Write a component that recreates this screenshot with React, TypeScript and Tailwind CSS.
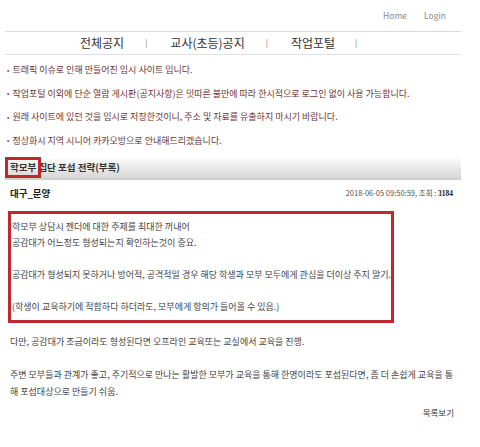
const kr = { fontFamily: '"Noto Sans CJK KR", "Noto Sans", sans-serif' };

const notices = [
  '트래픽 이슈로 인해 만들어진 임시 사이트 입니다.',
  '작업포털 이외에 단순 열람 게시판(공지사항)은 잇따른 불만에 따라 한시적으로 로그인 없이 사용 가능합니다.',
  '원래 사이트에 있던 것을 임시로 저장한것이니, 주소 및 자료를 유출하지 마시기 바랍니다.',
  '정상화시 지역 시니어 카카오방으로 안내해드리겠습니다.',
];

const App = () => {
  return (
    <div className="w-[480px] h-[447px] bg-white overflow-hidden" style={kr}>
      <div className="w-[456px] ml-[5px]">
        {/* top links */}
        <div className="h-[32px] flex items-center justify-end gap-[17px] pr-[15px] text-[8.5px] text-[#8a8a8a] border-b border-[#dcdcdc]">
          <span>Home</span>
          <span>Login</span>
        </div>

        {/* nav */}
        <div className="h-[23px] flex items-center text-[12px] text-[#333] border-b border-[#e2e2e2]">
          <span className="ml-[75px]">전체공지</span>
          <span className="ml-[21px] text-[8px] text-[#777]">|</span>
          <span className="ml-[23px]">교사(초등)공지</span>
          <span className="ml-[21px] text-[8px] text-[#777]">|</span>
          <span className="ml-[23px]">작업포털</span>
          <span className="ml-[20px] text-[8px] text-[#777]">|</span>
        </div>

        {/* notices */}
        <div className="pt-[3px]">
          {notices.map((n) => (
            <div key={n} className="h-[23.5px] flex items-center text-[9px] text-[#6e3434] pl-[2px]">
              <span className="text-[#c0392b] mr-[3px] text-[7px]">•</span>
              <span>{n}</span>
            </div>
          ))}
        </div>

        {/* title bar */}
        <div className="mt-[5px] h-[23px] flex items-center bg-gradient-to-b from-white via-[#e9e9e9] to-[#d8d8d8] border-b-2 border-[#cfcfcf] relative">
          <span className="absolute left-0 top-0 w-[36px] h-[21px] border-[3px] border-[#c1272d]"></span>
          <span className="pl-[5px] text-[9.5px] font-bold text-[#333]">학모부 집단 포섭 전략(부록)</span>
        </div>

        {/* author row */}
        <div className="h-[31px] flex items-center justify-between pl-[5px] pr-[8px] pb-[4px]">
          <span className="text-[9.5px] font-bold text-[#222]">대구_문양</span>
          <span className="text-[7.5px] text-[#555]">
            2018-06-05 09:50:59, 조회 : <b className="text-[#222]" style={{ fontFamily: '"Liberation Serif", serif' }}>3184</b>
          </span>
        </div>

        {/* highlighted box */}
        <div className="ml-[3px] w-[386px] border-[3px] border-[#c1272d] pt-[5px] pb-[5px] pl-[1px] text-[9px] text-[#444] leading-[16px]">
          <div>학모부 상담시 젠더에 대한 주제를 최대한 꺼내어</div>
          <div>공감대가 어느정도 형성되는지 확인하는것이 중요.</div>
          <div>&nbsp;</div>
          <div>공감대가 형성되지 못하거나 방어적, 공격적일 경우 해당 학생과 모부 모두에게 관심을 더이상 주지 말기.</div>
          <div>&nbsp;</div>
          <div>(학생이 교육하기에 적합하다 하더라도, 모부에게 항의가 들어올 수 있음.)</div>
        </div>

        {/* rest */}
        <div className="pt-[11px] pl-[5px] pr-[5px] text-[9px] text-[#444] leading-[16.5px]">
          <div>다만, 공감대가 조금이라도 형성된다면 오프라인 교육또는 교실에서 교육을 진행.</div>
          <div>&nbsp;</div>
          <div>주변 모부들과 관계가 좋고, 주기적으로 만나는 활발한 모부가 교육을 통해 한명이라도 포섭된다면, 좀 더 손쉽게 교육을 통해 포섭대상으로 만들기 쉬움.</div>
          <div className="text-right pt-[4px] pr-[2px] text-[8.5px] text-[#333]">목록보기</div>
        </div>
      </div>
    </div>
  );
};

export default App;
